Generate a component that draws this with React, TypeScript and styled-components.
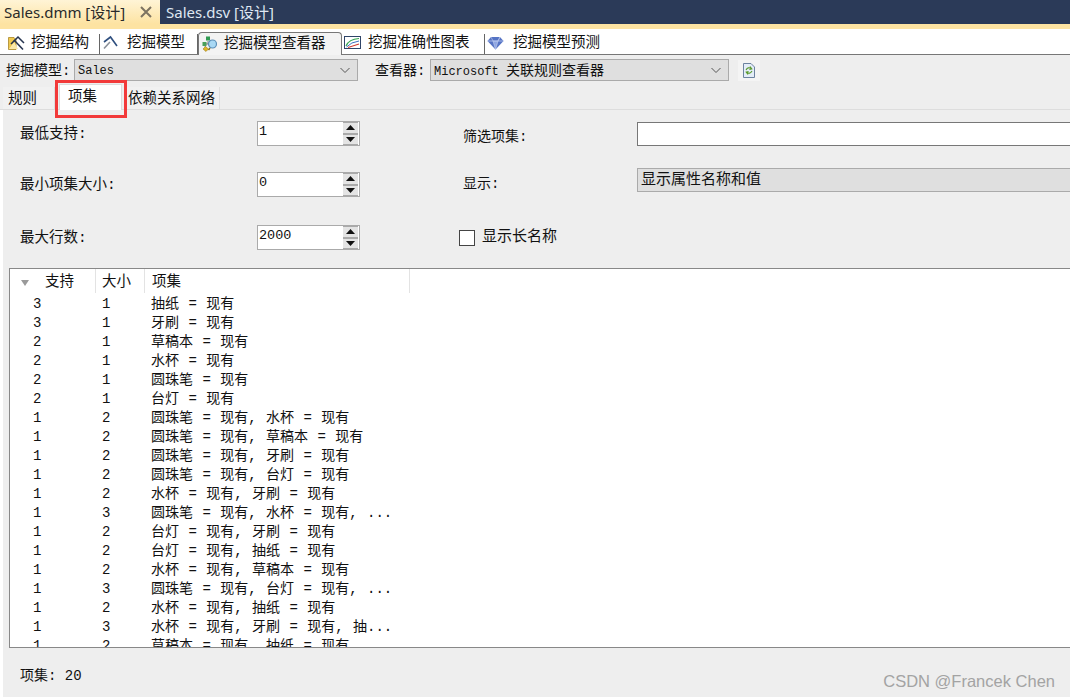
import React from 'react';
import styled, { createGlobalStyle } from 'styled-components';

const MONO = `"Liberation Mono", "Noto Sans CJK SC", monospace`;

const rows: [number, number, string][] = [
  [3, 1, '抽纸 = 现有'],
  [3, 1, '牙刷 = 现有'],
  [2, 1, '草稿本 = 现有'],
  [2, 1, '水杯 = 现有'],
  [2, 1, '圆珠笔 = 现有'],
  [2, 1, '台灯 = 现有'],
  [1, 2, '圆珠笔 = 现有, 水杯 = 现有'],
  [1, 2, '圆珠笔 = 现有, 草稿本 = 现有'],
  [1, 2, '圆珠笔 = 现有, 牙刷 = 现有'],
  [1, 2, '圆珠笔 = 现有, 台灯 = 现有'],
  [1, 2, '水杯 = 现有, 牙刷 = 现有'],
  [1, 3, '圆珠笔 = 现有, 水杯 = 现有, ...'],
  [1, 2, '台灯 = 现有, 牙刷 = 现有'],
  [1, 2, '台灯 = 现有, 抽纸 = 现有'],
  [1, 2, '水杯 = 现有, 草稿本 = 现有'],
  [1, 3, '圆珠笔 = 现有, 台灯 = 现有, ...'],
  [1, 2, '水杯 = 现有, 抽纸 = 现有'],
  [1, 3, '水杯 = 现有, 牙刷 = 现有, 抽...'],
  [1, 2, '草稿本 = 现有, 抽纸 = 现有'],
];

const StructureIcon = () => (
  <svg width="18" height="16" viewBox="0 0 18 16">
    <path d="M0.5 2.5 H6 L8 4.5 V14.5 H0.5Z" fill="#f0c94e" stroke="#a8862a" strokeWidth="0.8" />
    <path d="M1 14 L6 7 L10 14Z" fill="#fbe9a8" />
    <path d="M6 5 L15 14.5" stroke="#26344f" strokeWidth="1.6" />
    <path d="M3 9 L10 2 L16 8" fill="none" stroke="#26344f" strokeWidth="1.5" />
  </svg>
);

const PickIcon = () => (
  <svg width="16" height="15" viewBox="0 0 16 15">
    <path d="M2 13.5 L8 7" stroke="#8a8f98" strokeWidth="1.6" />
    <path d="M2 7 L8.5 2 L15 11" fill="none" stroke="#2f4f7f" strokeWidth="1.6" />
  </svg>
);

const ViewerIcon = () => (
  <svg width="16" height="16" viewBox="0 0 16 16">
    <rect x="4" y="0.5" width="4" height="4" fill="#2f9a52" />
    <rect x="0.5" y="6" width="4" height="4" fill="#4a9f5a" />
    <path d="M6 5 V8 M4 8 H7 M3 10 L3.5 12" stroke="#666" strokeWidth="0.8" />
    <path d="M3.5 10.5 L6.5 13 L4 15.5 L1 13Z" fill="#e2b625" stroke="#8a6f14" strokeWidth="0.5" />
    <circle cx="10.5" cy="8" r="4" fill="#a8d8f4" stroke="#5c8fb8" strokeWidth="1.2" />
    <path d="M8 12 L6.5 14" stroke="#8a6f14" strokeWidth="1.4" />
  </svg>
);

const ChartIcon = () => (
  <svg width="17" height="15" viewBox="0 0 17 15">
    <rect x="0.5" y="1.5" width="16" height="12" fill="#fff" stroke="#2f4468" />
    <path d="M2 11 Q5 4 15 3.5" fill="none" stroke="#35a650" strokeWidth="1.2" />
    <path d="M2.5 12 Q7 7 15 6" fill="none" stroke="#3a6fc0" strokeWidth="1" />
    <path d="M4 12.5 L15 9" stroke="#d03a30" strokeWidth="1.2" />
  </svg>
);

const DiamondIcon = () => (
  <svg width="17" height="14" viewBox="0 0 17 14">
    <path d="M4 1 H13 L16.5 5 L8.5 13.5 L0.5 5Z" fill="#5573c4" />
    <path d="M4 1 L6 5 H11 L13 1 L11 5 L8.5 13.5 L6 5" fill="#8fa6e2" stroke="#c4d2f2" strokeWidth="0.6" />
    <path d="M0.5 5 H16.5" stroke="#b8c8f0" strokeWidth="0.8" />
  </svg>
);

const RefreshIcon = () => (
  <svg width="12" height="15" viewBox="0 0 12 15">
    <path d="M0.5 0.5 H8 L11.5 4 V14.5 H0.5Z" fill="#e4edf8" stroke="#6d83a0" />
    <path d="M3 7 Q5 3.5 8.5 5.5 M7 3.5 L8.8 5.8 L6.4 6.4" fill="none" stroke="#5a9a2c" strokeWidth="1.1" />
    <path d="M9 8 Q7 11.5 3.5 9.5 M5 11.5 L3.2 9.2 L5.6 8.6" fill="none" stroke="#5a9a2c" strokeWidth="1.1" />
  </svg>
);

const CloseIcon = () => (
  <svg width="12" height="12" viewBox="0 0 12 12">
    <path d="M1 1 L11 11 M11 1 L1 11" stroke="#7d7361" strokeWidth="2" />
  </svg>
);

const Chevron = () => (
  <svg width="12" height="7" viewBox="0 0 12 7">
    <path d="M1.5 1 L6 5.5 L10.5 1" fill="none" stroke="#555" strokeWidth="1" />
  </svg>
);

const Spinner = ({ value }: { value: string }) => (
  <SpinBox>
    <SpinValue>{value}</SpinValue>
    <SpinButtons>
      <SpinButton>
        <svg width="9" height="5" viewBox="0 0 9 5"><path d="M4.5 0 L9 5 H0Z" fill="#111" /></svg>
      </SpinButton>
      <SpinButton>
        <svg width="9" height="5" viewBox="0 0 9 5"><path d="M0 0 H9 L4.5 5Z" fill="#111" /></svg>
      </SpinButton>
    </SpinButtons>
  </SpinBox>
);

const App = () => (
  <Page>
    <GlobalStyle />
    <DocTabs>
      <ActiveDoc>
        <span>Sales.dmm [设计]</span>
        <CloseIcon />
      </ActiveDoc>
      <InactiveDoc>Sales.dsv [设计]</InactiveDoc>
    </DocTabs>
    <GoldStripe />
    <DesignerTabs>
      <DesignerTab $width={94} $gap={5}><StructureIcon />挖掘结构</DesignerTab>
      <DesignerTab $width={98} $gap={9}><PickIcon />挖掘模型</DesignerTab>
      <SelectedDesignerTab><ViewerIcon />挖掘模型查看器</SelectedDesignerTab>
      <DesignerTab $width={143} $gap={7}><ChartIcon />挖掘准确性图表</DesignerTab>
      <DesignerTab $width={130} $gap={9}><DiamondIcon />挖掘模型预测</DesignerTab>
    </DesignerTabs>
    <ModelBar>
      <BarLabel>挖掘模型:</BarLabel>
      <Combo $width={284}><ComboText>Sales</ComboText><Chevron /></Combo>
      <BarLabel $indent={17}>查看器:</BarLabel>
      <Combo $width={299}>
        <ComboText>Microsoft <ComboCjk>关联规则查看器</ComboCjk></ComboText>
        <Chevron />
      </Combo>
      <RefreshSlot><RefreshIcon /></RefreshSlot>
    </ModelBar>
    <InnerTabs>
      <InnerTab $width={52} $pad={5}>规则</InnerTab>
      <ActiveInnerTab>项集</ActiveInnerTab>
      <InnerTab $width={94} $pad={2}>依赖关系网络</InnerTab>
    </InnerTabs>
    <Panel>
      <FormGrid>
        <FieldRow $height={51}>
          <FieldLabel>最低支持:</FieldLabel>
          <Spinner value="1" />
          <SideLabel $shift={7}>筛选项集:</SideLabel>
          <FilterInput />
        </FieldRow>
        <FieldRow $height={53}>
          <FieldLabel>最小项集大小:</FieldLabel>
          <Spinner value="0" />
          <SideLabel $shift={3}>显示:</SideLabel>
          <DisplayCombo>显示属性名称和值</DisplayCombo>
        </FieldRow>
        <FieldRow $height={43}>
          <FieldLabel>最大行数:</FieldLabel>
          <Spinner value="2000" />
          <CheckRow>
            <CheckBox />
            <CheckText>显示长名称</CheckText>
          </CheckRow>
        </FieldRow>
      </FormGrid>
      <ListBox>
        <ListHeader>
          <HeaderCell $width={86} $indent={35}>
            <SortMark />
            支持
          </HeaderCell>
          <HeaderCell $width={49} $indent={6}>大小</HeaderCell>
          <HeaderCell $width={265} $indent={7}>项集</HeaderCell>
        </ListHeader>
        <ListBody>
          {rows.map(([support, size, items], i) => (
            <ListRow key={i}>
              <span>{support}</span>
              <span>{size}</span>
              <span>{items}</span>
            </ListRow>
          ))}
        </ListBody>
      </ListBox>
      <Footer>项集: 20</Footer>
    </Panel>
    <RedBox />
    <Watermark>CSDN @Francek Chen</Watermark>
  </Page>
);

export default App;

const GlobalStyle = createGlobalStyle`
  html, body {
    margin: 0;
    padding: 0;
    background: #fff;
  }
`;

const Page = styled.div`
  position: relative;
  width: 1070px;
  height: 697px;
  overflow: hidden;
  display: flex;
  flex-direction: column;
  background: #fff;
  color: #111;
  font-family: ${MONO};
  font-size: 14px;
  line-height: 18px;
`;

const DocTabs = styled.div`
  flex: none;
  height: 24px;
  display: flex;
  background: #2b3a58;
  font-family: "Noto Sans", "Noto Sans CJK SC", sans-serif;
  font-size: 15px;
`;

const ActiveDoc = styled.div`
  width: 160px;
  padding: 0 8px 0 4px;
  box-sizing: border-box;
  display: flex;
  align-items: center;
  justify-content: space-between;
  background: linear-gradient(#fff4d6, #fde3a2);
  color: #2a2a2a;
`;

const InactiveDoc = styled.div`
  padding-left: 6px;
  display: flex;
  align-items: center;
  color: #dfe7f2;
`;

const GoldStripe = styled.div`
  flex: none;
  height: 5px;
  background: #fde3a2;
`;

const DesignerTabs = styled.div`
  flex: none;
  height: 25px;
  display: flex;
  align-items: flex-end;
  padding-left: 6px;
  border-bottom: 1px solid #777;
  font-size: 14.5px;
`;

const DesignerTab = styled.div<{ $width: number; $gap: number }>`
  width: ${(p) => p.$width}px;
  height: 20px;
  padding: 0 0 3px 2px;
  box-sizing: border-box;
  flex: none;
  display: flex;
  align-items: center;
  gap: ${(p) => p.$gap}px;
  border-right: 1px solid #666;
  white-space: nowrap;

  &:last-child {
    border-right: none;
  }
`;

const SelectedDesignerTab = styled.div`
  width: 144px;
  height: 23px;
  margin-bottom: -1px;
  padding: 0 0 1px 3px;
  box-sizing: border-box;
  flex: none;
  display: flex;
  align-items: center;
  gap: 6px;
  background: #f3f3f3;
  border: 1px solid #777;
  border-bottom: none;
  border-radius: 4px 4px 0 0;
  white-space: nowrap;
`;

const ModelBar = styled.div`
  flex: none;
  height: 30px;
  display: flex;
  align-items: center;
  padding: 0 0 0 6px;
  background: #eee;
`;

const BarLabel = styled.span<{ $indent?: number }>`
  width: ${(p) => (p.$indent ? 55 : 68)}px;
  margin-left: ${(p) => p.$indent ?? 0}px;
  padding-top: 1px;
  flex: none;
  white-space: nowrap;
`;

const Combo = styled.div<{ $width: number }>`
  width: ${(p) => p.$width}px;
  height: 22px;
  flex: none;
  box-sizing: border-box;
  display: flex;
  align-items: center;
  justify-content: space-between;
  padding: 0 6px 0 3px;
  background: #dfdfdf;
  border: 1px solid #aaa;
  font-size: 12px;
  white-space: nowrap;
`;

const ComboText = styled.span`
  padding-top: 2px;
`;

const ComboCjk = styled.span`
  font-size: 14px;
`;

const RefreshSlot = styled.div`
  margin-left: 9px;
  padding: 3px 5px;
  display: flex;
  align-items: center;
  background: #f4f4f4;
`;

const InnerTabs = styled.div`
  flex: none;
  height: 24px;
  display: flex;
  align-items: flex-end;
  padding-left: 3px;
  background: #eee;
  border-bottom: 1px solid #ddd;
  font-size: 14.5px;
`;

const InnerTab = styled.div<{ $width: number; $pad: number }>`
  width: ${(p) => p.$width}px;
  height: 22px;
  box-sizing: border-box;
  flex: none;
  padding: 2px 0 0 ${(p) => p.$pad}px;
  display: flex;
  align-items: center;
  background: #f1f1f1;
  border-right: 1px solid #ddd;
  white-space: nowrap;
`;

const ActiveInnerTab = styled.div`
  width: 63px;
  height: 26px;
  margin: 0 4px -1px 4px;
  box-sizing: border-box;
  flex: none;
  padding: 0 0 1px 8px;
  display: flex;
  align-items: center;
  background: #fff;
  border: 1px solid #ddd;
  border-bottom: none;
`;

const Panel = styled.div`
  flex: 1;
  min-height: 0;
  margin-left: 3px;
  display: flex;
  flex-direction: column;
  background: #eee;
`;

const FormGrid = styled.div`
  flex: none;
  height: 158px;
  padding: 11px 0 0 17px;
  box-sizing: border-box;
  font-size: 14.5px;
`;

const FieldRow = styled.div<{ $height: number }>`
  height: ${(p) => p.$height}px;
  display: flex;
  align-items: flex-start;
`;

const FieldLabel = styled.div`
  width: 237px;
  flex: none;
  padding-top: 4px;
  white-space: nowrap;
`;

const SpinBox = styled.div`
  width: 103px;
  height: 25px;
  flex: none;
  box-sizing: border-box;
  display: flex;
  justify-content: space-between;
  background: #fff;
  border: 1px solid #aaa;
`;

const SpinValue = styled.span`
  padding: 1px 0 0 1px;
  font-size: 13.5px;
`;

const SpinButtons = styled.div`
  width: 15px;
  margin-right: 1px;
  display: flex;
  flex-direction: column;
  gap: 2px;
  padding: 1px 0;
  background: #aaa;
`;

const SpinButton = styled.div`
  flex: 1;
  display: flex;
  align-items: center;
  justify-content: center;
  background: #e4e4e4;
`;

const SideLabel = styled.div<{ $shift: number }>`
  width: 174px;
  margin-left: 103px;
  padding-top: ${(p) => p.$shift}px;
  flex: none;
  white-space: nowrap;
  font-size: 14px;
`;

const FilterInput = styled.div`
  flex: 1;
  height: 24px;
  margin-top: 1px;
  box-sizing: border-box;
  background: #fff;
  border: 1px solid #777;
  border-right: none;
`;

const DisplayCombo = styled.div`
  flex: 1;
  height: 24px;
  margin-top: -4px;
  box-sizing: border-box;
  padding: 1px 0 0 3px;
  display: flex;
  align-items: center;
  background: #dfdfdf;
  border: 1px solid #aaa;
  border-right: none;
  font-size: 15px;
`;

const CheckRow = styled.div`
  height: 25px;
  margin-left: 99px;
  display: flex;
  align-items: center;
  gap: 7px;
  font-size: 15px;
`;

const CheckBox = styled.span`
  width: 16px;
  height: 16px;
  box-sizing: border-box;
  background: #fff;
  border: 1px solid #444;
`;

const CheckText = styled.span`
  padding-top: 1px;
`;

const ListBox = styled.div`
  height: 380px;
  flex: none;
  margin-left: 6px;
  box-sizing: border-box;
  overflow: hidden;
  background: #fff;
  border: 1px solid #888;
  border-right: none;
`;

const ListHeader = styled.div`
  height: 25px;
  display: flex;
  align-items: flex-start;
  font-size: 14.5px;
`;

const HeaderCell = styled.div<{ $width: number; $indent: number }>`
  position: relative;
  width: ${(p) => p.$width}px;
  height: 24px;
  box-sizing: border-box;
  padding: 1px 0 0 ${(p) => p.$indent}px;
  display: flex;
  align-items: center;
  border-right: 1px solid #e3e3e3;
`;

const SortMark = styled.span`
  position: absolute;
  left: 11px;
  top: 11px;
  border-left: 4px solid transparent;
  border-right: 4px solid transparent;
  border-top: 6px solid #9a9a9a;
`;

const ListBody = styled.div`
  display: flex;
  flex-direction: column;
`;

const ListRow = styled.div`
  flex: none;
  height: 19px;
  display: grid;
  grid-template-columns: 69px 49px 1fr;
  align-items: center;
  padding-left: 23px;
  white-space: pre;
  word-spacing: 1px;
`;

const Footer = styled.div`
  flex: 1;
  display: flex;
  align-items: center;
  padding: 6px 0 0 17px;
`;

const RedBox = styled.div`
  position: absolute;
  left: 55px;
  top: 80px;
  width: 72px;
  height: 38px;
  box-sizing: border-box;
  border: 3px solid #f23a3a;
`;

const Watermark = styled.div`
  position: absolute;
  right: 15px;
  top: 672px;
  font-family: "Liberation Sans", sans-serif;
  font-size: 16.5px;
  color: #a3a3a3;
`;
